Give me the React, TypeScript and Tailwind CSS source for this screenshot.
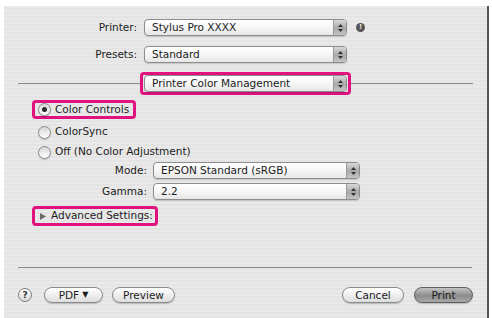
const font = { fontFamily: '"DejaVu Sans", "Liberation Sans", sans-serif' }

function Arrows() {
  return (
    <div className="flex w-[13px] shrink-0 flex-col items-center justify-center gap-[2px] self-stretch rounded-r-[3px] border-l border-[#9a9a9a] bg-[linear-gradient(#d8d8d8,#a9a9a9_55%,#c4c4c4)]">
      <svg width="5" height="3" viewBox="0 0 5 3"><polygon points="2.5,0 5,3 0,3" fill="#333" /></svg>
      <svg width="5" height="3" viewBox="0 0 5 3"><polygon points="0,0 5,0 2.5,3" fill="#333" /></svg>
    </div>
  )
}

function Popup({ text, w }: { text: string; w: string }) {
  return (
    <div className={`flex h-[17px] ${w} shrink-0 items-stretch rounded-[4px] border border-[#8c8c8c] bg-[linear-gradient(#ffffff,#f6f6f6_50%,#e6e6e6)] shadow-[0_1px_1px_rgba(0,0,0,0.15)]`}>
      <div className="flex flex-1 items-center whitespace-nowrap pl-[7px] text-[10.5px] leading-none text-[#1c1c1c]">{text}</div>
      <Arrows />
    </div>
  )
}

function Radio({ on }: { on?: boolean }) {
  return (
    <div className="flex h-[13px] w-[13px] shrink-0 items-center justify-center rounded-full border border-[#8a8a8a] bg-[linear-gradient(#d6d6d6,#ffffff)] shadow-[0_1px_1px_rgba(0,0,0,0.2)]">
      {on && <div className="h-[5px] w-[5px] rounded-full bg-[#2a2a2a]" />}
    </div>
  )
}

function Btn({ children, w, dark }: { children: React.ReactNode; w: string; dark?: boolean }) {
  return (
    <div
      className={`flex h-[16px] ${w} shrink-0 items-center justify-center whitespace-nowrap rounded-full border text-[10.5px] leading-none ${
        dark
          ? 'border-[#5e5e5e] bg-[linear-gradient(#c4c4c4,#8c8c8c_55%,#a8a8a8)] text-[#1a1a1a]'
          : 'border-[#8a8a8a] bg-[linear-gradient(#ffffff,#efefef_50%,#dcdcdc)] text-[#1c1c1c]'
      } shadow-[0_1px_1px_rgba(0,0,0,0.2)]`}
    >
      {children}
    </div>
  )
}

export default function App() {
  return (
    <div className="h-[318px] w-[492px] bg-white pl-[4px] pr-[3px] pt-[6px]" style={font}>
      <div className="flex h-[312px] flex-col border-r-2 border-[#555] bg-[repeating-linear-gradient(#e9e9e9_0px,#e9e9e9_2px,#e4e4e4_2px,#e4e4e4_4px)] text-[10.5px] text-[#1c1c1c]">
        {/* Printer */}
        <div className="mt-[13px] flex h-[17px] items-center">
          <div className="w-[133px] shrink-0 text-right">Printer:</div>
          <div className="ml-[7px]"><Popup text="Stylus Pro XXXX" w="w-[203px]" /></div>
          <div className="ml-[9px] flex h-[9px] w-[9px] items-center justify-center rounded-full bg-[#555] text-[7px] font-bold leading-none text-[#e9e9e9]">!</div>
        </div>
        {/* Presets */}
        <div className="mt-[10px] flex h-[17px] items-center">
          <div className="w-[133px] shrink-0 text-right">Presets:</div>
          <div className="ml-[7px]"><Popup text="Standard" w="w-[203px]" /></div>
        </div>
        {/* Printer Color Management */}
        <div className="mt-[9px] flex h-[23px] items-center">
          <div className="ml-[14px] h-px w-[122px] shrink-0 bg-[#8a8a8a]" />
          <div className="flex h-[23px] w-[211px] shrink-0 items-center justify-center rounded-[4px] border-[3px] border-[#e0127e]">
            <Popup text="Printer Color Management" w="w-[203px]" />
          </div>
          <div className="h-px w-[122px] shrink-0 bg-[#8a8a8a]" />
        </div>
        {/* Color Controls */}
        <div className="mt-[5px] ml-[28px] flex h-[19px] w-[104px] items-center gap-[4px] whitespace-nowrap rounded-[4px] border-[3px] border-[#e0127e] pl-[3px]">
          <Radio on />
          <span>Color Controls</span>
        </div>
        <div className="mt-[3px] ml-[34px] flex h-[20px] items-center gap-[4px] whitespace-nowrap">
          <Radio />
          <span>ColorSync</span>
        </div>
        <div className="ml-[34px] flex h-[20px] items-center gap-[4px] whitespace-nowrap">
          <Radio />
          <span>Off (No Color Adjustment)</span>
        </div>
        {/* Mode */}
        <div className="flex h-[17px] items-center">
          <div className="w-[143px] shrink-0 text-right">Mode:</div>
          <div className="ml-[6px]"><Popup text="EPSON Standard (sRGB)" w="w-[207px]" /></div>
        </div>
        <div className="mt-[4px] flex h-[17px] items-center">
          <div className="w-[143px] shrink-0 text-right">Gamma:</div>
          <div className="ml-[6px]"><Popup text="2.2" w="w-[207px]" /></div>
        </div>
        {/* Advanced */}
        <div className="mt-[6px] ml-[28px] flex h-[20px] w-[126px] items-center gap-[5px] whitespace-nowrap rounded-[4px] border-[3px] border-[#e0127e] pl-[5px]">
          <svg width="6" height="7" viewBox="0 0 6 7" className="shrink-0"><polygon points="0,0 6,3.5 0,7" fill="#6a6a6a" /></svg>
          <span>Advanced Settings:</span>
        </div>
        <div className="mt-[41px] ml-[14px] h-px w-[454px] bg-[#8a8a8a]" />
        {/* Buttons */}
        <div className="mt-[19px] flex h-[16px] items-center pl-[14px] pr-[14px]">
          <div className="flex h-[14px] w-[14px] items-center justify-center rounded-full border border-[#7e7e7e] bg-[linear-gradient(#ffffff,#d8d8d8)] text-[9px] font-bold leading-none text-[#333]">?</div>
          <div className="ml-[12px]"><Btn w="w-[59px]">PDF <span className="ml-[3px] text-[8px]">▼</span></Btn></div>
          <div className="ml-[9px]"><Btn w="w-[63px]">Preview</Btn></div>
          <div className="flex-1" />
          <Btn w="w-[62px]">Cancel</Btn>
          <div className="ml-[10px]"><Btn w="w-[59px]" dark>Print</Btn></div>
        </div>
      </div>
    </div>
  )
}
